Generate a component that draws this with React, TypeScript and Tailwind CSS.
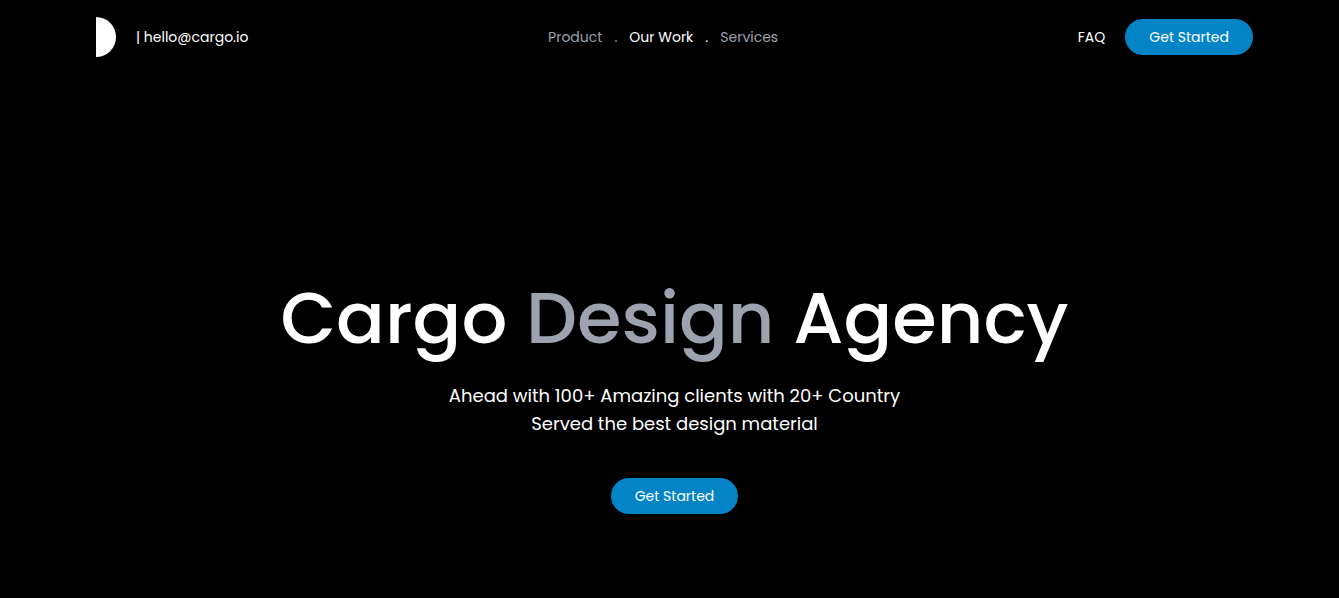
import React from "react";

function GetStarted() {
  return (
    <button
      type="button"
      className="h-9 cursor-pointer rounded-full bg-[#0284c7] px-6 text-center text-sm whitespace-nowrap text-white"
    >
      Get Started
    </button>
  );
}

function Header() {
  return (
    <header className="flex items-center justify-between pt-[17px]">
      <div className="flex items-center gap-5">
        <a href="#" aria-label="Cargo home">
          <span className="block h-10 w-5 rounded-r-full bg-white" />
        </a>
        <a href="mailto:hello@cargo.io" className="text-sm">
          | hello@cargo.io
        </a>
      </div>
      <nav aria-label="Main" className="flex items-center gap-3 text-sm">
        <a href="#product" className="text-[#9ca3af]">
          Product
        </a>
        <span className="text-[#9ca3af]">.</span>
        <a href="#work">Our Work</a>
        <span>.</span>
        <a href="#services" className="text-[#9ca3af]">
          Services
        </a>
      </nav>
      <div className="flex items-center gap-5">
        <a href="#faq" className="text-sm">
          FAQ
        </a>
        <GetStarted />
      </div>
    </header>
  );
}

export default function App() {
  return (
    <div className="min-h-screen bg-black pr-[86px] pl-24 font-['Poppins','Inter',sans-serif] text-white">
      <Header />
      <main className="flex flex-col items-center pt-[225px] pb-16 text-center">
        <h1 className="text-7xl font-medium">
          Cargo <span className="text-[#9ca3af]">Design</span> Agency
        </h1>
        <p className="mt-7 mb-10 text-lg leading-7">
          Ahead with 100+ Amazing clients with 20+ Country
          <br />
          Served the best design material
        </p>
        <GetStarted />
      </main>
    </div>
  );
}
